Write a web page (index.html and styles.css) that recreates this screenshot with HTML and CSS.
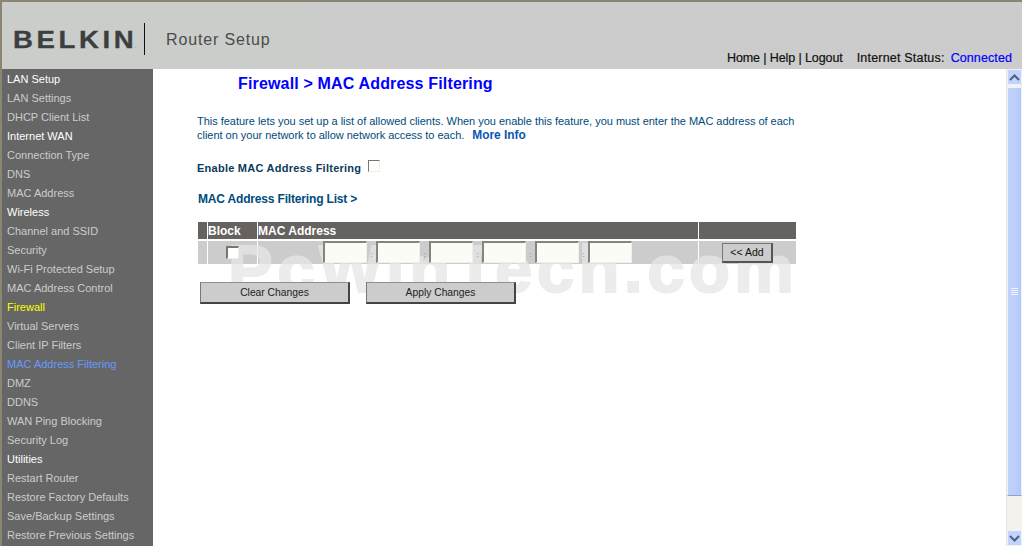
FILE: index.html
```html
<!DOCTYPE html>
<html lang="en">
<head>
    <meta charset="UTF-8">
    <title>Router Setup</title>
    <link rel="stylesheet" href="styles.css">
</head>
<body>
    <div class="header">
        <div class="brand">
            <span class="logo">BELKIN<small>.</small></span>
            <span class="divider"></span>
            <span class="product">Router Setup</span>
        </div>
        <div class="top-links">
            <span class="links">Home | Help | Logout</span>
            <span class="status">Internet Status:</span>
            <span class="connected">Connected</span>
        </div>
    </div>
    <div class="container">
        <div class="sidebar">
            <div class="nav-head">LAN Setup</div>
            <div class="nav-item">LAN Settings</div>
            <div class="nav-item">DHCP Client List</div>
            <div class="nav-head">Internet WAN</div>
            <div class="nav-item">Connection Type</div>
            <div class="nav-item">DNS</div>
            <div class="nav-item">MAC Address</div>
            <div class="nav-head">Wireless</div>
            <div class="nav-item">Channel and SSID</div>
            <div class="nav-item">Security</div>
            <div class="nav-item">Wi-Fi Protected Setup</div>
            <div class="nav-item">MAC Address Control</div>
            <div class="nav-head nav-section">Firewall</div>
            <div class="nav-item">Virtual Servers</div>
            <div class="nav-item">Client IP Filters</div>
            <div class="nav-item nav-active">MAC Address Filtering</div>
            <div class="nav-item">DMZ</div>
            <div class="nav-item">DDNS</div>
            <div class="nav-item">WAN Ping Blocking</div>
            <div class="nav-item">Security Log</div>
            <div class="nav-head">Utilities</div>
            <div class="nav-item">Restart Router</div>
            <div class="nav-item">Restore Factory Defaults</div>
            <div class="nav-item">Save/Backup Settings</div>
            <div class="nav-item">Restore Previous Settings</div>
        </div>
        <div class="content">
            <h1>Firewall &gt; MAC Address Filtering</h1>
            <p class="intro">This feature lets you set up a list of allowed clients. When you enable this feature, you must enter the MAC address of each client on your network to allow network access to each. <b class="more">More Info</b></p>
            <div class="enable-row">
                <label>Enable MAC Address Filtering</label>
                <span class="check"></span>
            </div>
            <h2>MAC Address Filtering List &gt;</h2>
            <div class="mac-table">
                <div class="cell-head"></div>
                <div class="cell-head">Block</div>
                <div class="cell-head">MAC Address</div>
                <div class="cell-head"></div>
                <div class="cell"></div>
                <div class="cell cell-center"><span class="check check-row"></span></div>
                <div class="cell mac-fields">
                    <span class="field"></span><i>:</i>
                    <span class="field"></span><i>:</i>
                    <span class="field"></span><i>:</i>
                    <span class="field"></span><i>:</i>
                    <span class="field"></span><i>:</i>
                    <span class="field"></span>
                </div>
                <div class="cell cell-center"><button class="add-btn">&lt;&lt; Add</button></div>
            </div>
            <div class="actions">
                <button class="action-btn">Clear Changes</button>
                <button class="action-btn">Apply Changes</button>
            </div>
            <div class="watermark">PcWinTech.com</div>
        </div>
        <div class="scrollbar">
            <div class="scroll-btn">
                <svg width="11" height="7" viewBox="0 0 11 7"><path d="M1 6 L5.5 1.5 L10 6" fill="none" stroke="#4d6185" stroke-width="2"/></svg>
            </div>
            <div class="scroll-thumb">
                <span></span><span></span><span></span><span></span>
            </div>
            <div class="scroll-track"></div>
            <div class="scroll-btn">
                <svg width="11" height="7" viewBox="0 0 11 7"><path d="M1 1 L5.5 5.5 L10 1" fill="none" stroke="#4d6185" stroke-width="2"/></svg>
            </div>
        </div>
    </div>
</body>
</html>
```

FILE: styles.css
```css
html, body {
    height: 100%;
}

body {
    font-family: "Liberation Sans", Arial, sans-serif;
    margin: 0;
    padding: 0;
    overflow: hidden;
    background-color: white;
}

.header {
    height: 67px;
    display: flex;
    justify-content: space-between;
    background-color: #cccccc;
    border-top: 2px solid #8b8674;
    border-left: 2px solid #8b8674;
}

.brand {
    width: 316px;
    height: 67px;
    display: flex;
    align-items: flex-start;
    background-color: #cbcdcb;
    box-sizing: border-box;
    padding: 21px 0 0 11px;
}

.logo {
    width: 121px;
    margin-top: 4px;
    font-size: 23px;
    line-height: 26px;
    font-weight: bold;
    letter-spacing: 3px;
    color: #3c3f3f;
    white-space: nowrap;
    transform: scaleX(1.2);
    transform-origin: left;
    -webkit-text-stroke: 0.3px;
}

.logo small {
    font-size: 5px;
    font-weight: normal;
    letter-spacing: 0;
    margin-left: -2px;
    -webkit-text-stroke: 0;
}

.divider {
    width: 1px;
    height: 32px;
    margin-left: 10px;
    background-color: #111;
}

.product {
    margin: 7px 0 0 21px;
    font-size: 16px;
    line-height: 20px;
    letter-spacing: 0.85px;
    color: #4a4c4c;
}

.top-links {
    display: flex;
    align-items: flex-end;
    padding: 0 10px 3px 0;
    font-size: 12.5px;
    line-height: 16px;
    color: #111;
    -webkit-text-stroke: 0.2px;
}

.links {
    letter-spacing: -0.1px;
}

.status {
    margin-left: 14px;
    letter-spacing: 0.2px;
}

.connected {
    margin-left: 6px;
    letter-spacing: 0.1px;
    color: #0000ff;
}

.container {
    display: flex;
    height: 477px;
}

.sidebar {
    flex-shrink: 0;
    width: 146px;
    border-left: 2px solid #8b8674;
    background-color: #666666;
    padding: 1px 0 0 5px;
    font-size: 11px;
    line-height: 19px;
}

.nav-head {
    color: white;
}

.nav-section {
    color: #ffff00;
}

.nav-item {
    color: #cccccc;
}

.nav-active {
    color: #6699ff;
}

.content {
    position: relative;
    flex: 1;
    padding: 6px 0 0 44px;
    min-width: 0;
}

h1 {
    margin: 0 0 0 41px;
    font-size: 16px;
    line-height: 18px;
    letter-spacing: 0.16px;
    color: #0000ff;
}

.intro {
    width: 610px;
    margin: 21px 0 0;
    font-size: 11px;
    line-height: 14px;
    letter-spacing: -0.02px;
    color: #004b7c;
}

.more {
    margin-left: 5px;
    font-size: 11.9px;
    color: #0b58b0;
}

.enable-row {
    display: flex;
    align-items: center;
    height: 18px;
    margin-top: 17px;
    font-size: 11px;
    letter-spacing: 0.25px;
    font-weight: bold;
    color: #0d3b5c;
}

.enable-row .check {
    margin: 0 0 4px 7px;
}

.check {
    display: inline-block;
    width: 10px;
    height: 10px;
    border: 1px solid;
    border-color: #77776a #f0efe6 #f0efe6 #77776a;
    background-color: white;
}

.check-row {
    position: relative;
    z-index: 1;
    border-width: 2px 1px 1px 2px;
}

h2 {
    margin: 14px 0 0 1px;
    font-size: 12px;
    line-height: 16px;
    letter-spacing: -0.17px;
    color: #004b7c;
}

.mac-table {
    display: grid;
    grid-template-columns: 9px 49px 440px 97px;
    gap: 1px;
    width: 598px;
    margin: 15px 0 0 1px;
}

.cell-head {
    height: 17px;
    background-color: #666260;
    font-size: 12px;
    line-height: 19px;
    font-weight: bold;
    color: white;
}

.cell {
    height: 23px;
    margin-top: 1px;
    background-color: #cccccc;
}

.cell-center {
    display: flex;
    align-items: center;
    justify-content: center;
}

.mac-fields {
    display: flex;
    align-items: flex-start;
    padding-left: 65px;
    font-size: 8px;
    color: #5a7a9a;
}

.mac-fields i {
    position: relative;
    z-index: 1;
    width: 9px;
    padding-top: 9px;
    text-align: center;
    font-style: normal;
}

.field {
    position: relative;
    z-index: 1;
    width: 44px;
    height: 22px;
    box-sizing: border-box;
    border-style: solid;
    border-width: 2px 1px 1px 2px;
    border-color: #85857a #f2f1e6 #f2f1e6 #85857a;
    background-color: #fbfbf8;
}

.add-btn {
    position: relative;
    z-index: 1;
    width: 51px;
    height: 20px;
    padding: 0;
    font-family: inherit;
    font-size: 10.5px;
    color: #111;
    background-color: #cccccc;
    border-style: solid;
    border-width: 1px 2px 2px 1px;
    border-color: #777777 #555555 #555555 #777777;
}

.actions {
    display: flex;
    gap: 16px;
    margin: 18px 0 0 3px;
}

.action-btn {
    position: relative;
    z-index: 1;
    width: 150px;
    height: 22px;
    padding: 0;
    font-family: inherit;
    font-size: 10.3px;
    color: #222;
    background-color: #cccccc;
    border-style: solid;
    border-width: 1px 2px 2px 1px;
    border-color: #8f8f8f #444444 #444444 #777777;
}

.watermark {
    position: absolute;
    left: 75px;
    top: 164px;
    font-size: 67px;
    line-height: 72px;
    font-weight: bold;
    letter-spacing: 4.5px;
    color: #e7e7e7;
    -webkit-text-stroke: 2px #e7e7e7;
    opacity: 0.76;
    white-space: nowrap;
    pointer-events: none;
}

.scrollbar {
    width: 16px;
    flex-shrink: 0;
    display: flex;
    flex-direction: column;
    background-color: #f4f2ec;
    border-left: 1px solid #e6e3da;
    box-sizing: border-box;
}

.scroll-btn {
    width: 15px;
    height: 16px;
    display: flex;
    align-items: center;
    justify-content: center;
    background-color: #c3d3fb;
    border: 1px solid #eef2fd;
    box-sizing: border-box;
}

.scroll-thumb {
    height: 409px;
    margin-top: 2px;
    display: flex;
    flex-direction: column;
    align-items: center;
    justify-content: center;
    gap: 1px;
    background: linear-gradient(to right, #c0d2fa, #bccffb 50%, #b4c9f8);
    border: 1px solid #eef2fd;
    border-bottom-color: #8aa2d6;
    box-sizing: border-box;
}

.scroll-thumb span {
    width: 7px;
    height: 1px;
    background-color: #eef3fe;
}

.scroll-track {
    flex: 1;
}
```
